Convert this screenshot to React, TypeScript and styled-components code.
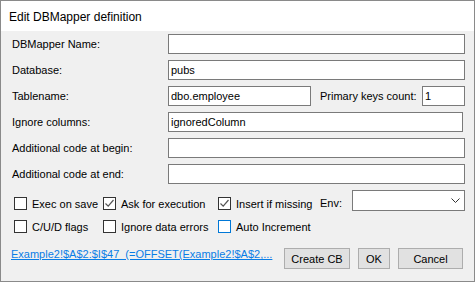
import * as React from "react";
import styled, { createGlobalStyle } from "styled-components";

const GlobalStyle = createGlobalStyle`
  html, body {
    margin: 0;
    padding: 0;
    background: #ffffff;
  }
  body {
    font-family: "Liberation Sans", Arial, sans-serif;
    font-size: 11px;
    color: #000;
  }
`;

const Window = styled.div`
  width: 475px;
  height: 282px;
  box-sizing: border-box;
  border: 1px solid #8a8a8a;
  background: #f0f0f0;
  display: flex;
  flex-direction: column;
`;

const TitleBar = styled.div`
  height: 30px;
  flex: none;
  background: #ffffff;
  display: flex;
  align-items: center;
  padding-left: 8px;
  padding-top: 1px;
  box-sizing: border-box;
  font-size: 12px;
`;

const Body = styled.div`
  flex: 1;
  padding: 3px 9px 0 11px;
  display: flex;
  flex-direction: column;
`;

const Fields = styled.div`
  display: flex;
  flex-direction: column;
  gap: 6px;
`;

const Row = styled.div`
  display: flex;
  align-items: center;
  height: 20px;
`;

const Label = styled.label`
  width: 156px;
  flex: none;
  line-height: 20px;
  white-space: nowrap;
`;

const Input = styled.div<{ $width?: number; $trim?: number }>`
  box-sizing: border-box;
  height: 20px;
  ${(p) => (p.$width ? `width: ${p.$width}px; flex: none;` : "flex: 1;")}
  margin-right: ${(p) => p.$trim ?? 0}px;
  background: #ffffff;
  border: 1px solid #7a7a7a;
  padding: 0 2px;
  line-height: 18px;
  white-space: nowrap;
  overflow: hidden;
`;

const InlineLabel = styled.span`
  margin-left: 9px;
  white-space: nowrap;
`;

const Spacer = styled.div`
  flex: 1;
`;

const Options = styled.div`
  margin-top: 6px;
  display: flex;
  flex-direction: column;
`;

const OptionRow = styled.div<{ $top?: number }>`
  display: grid;
  grid-template-columns: 89px 115px 102px auto 1fr;
  align-items: start;
  margin-top: ${(p) => p.$top ?? 0}px;
  padding-left: 2px;
`;

const CheckItem = styled.div<{ $offset?: number }>`
  display: flex;
  align-items: center;
  gap: 5px;
  height: 13px;
  margin-top: ${(p) => p.$offset ?? 0}px;
  white-space: nowrap;
`;

const Box = styled.span<{ $focus?: boolean }>`
  width: 13px;
  height: 13px;
  box-sizing: border-box;
  flex: none;
  background: #ffffff;
  border: 1px solid ${(p) => (p.$focus ? "#0078d7" : "#333333")};
  display: flex;
  align-items: center;
  justify-content: center;
`;

const EnvLabel = styled.span`
  margin-top: 7px;
  line-height: 13px;
`;

const Combo = styled.div`
  justify-self: end;
  width: 113px;
  height: 21px;
  box-sizing: border-box;
  background: #ffffff;
  border: 1px solid #7a7a7a;
  display: flex;
  align-items: center;
  justify-content: flex-end;
  padding-right: 4px;
`;

const Footer = styled.div`
  margin-top: 15px;
  display: flex;
  align-items: flex-start;
`;

const Link = styled.a`
  margin-left: -1px;
  margin-top: 0px;
  line-height: 13px;
  color: #0a7de6;
  text-decoration: underline;
  white-space: pre;
  cursor: pointer;
`;

const Buttons = styled.div`
  margin-left: auto;
  margin-right: 2px;
  display: flex;
  gap: 8px;
`;

const Button = styled.button<{ $width: number }>`
  width: ${(p) => p.$width}px;
  height: 21px;
  box-sizing: border-box;
  padding: 0;
  background: #e1e1e1;
  border: 1px solid #adadad;
  font-family: "Liberation Sans", Arial, sans-serif;
  font-size: 11px;
  color: #000;
`;

function Check({ checked, focus, label, offset }: { checked?: boolean; focus?: boolean; label: string; offset?: number }) {
  return (
    <CheckItem $offset={offset}>
      <Box $focus={focus}>
        {checked && (
          <svg width="11" height="11" viewBox="0 0 11 11">
            <polyline points="1.5,5.5 4.2,8.2 9.5,2" fill="none" stroke="#555" strokeWidth="1.2" />
          </svg>
        )}
      </Box>
      <span>{label}</span>
    </CheckItem>
  );
}

export default function App() {
  return (
    <>
      <GlobalStyle />
      <Window>
        <TitleBar>Edit DBMapper definition</TitleBar>
        <Body>
          <Fields>
            <Row>
              <Label>DBMapper Name:</Label>
              <Input />
            </Row>
            <Row>
              <Label>Database:</Label>
              <Input>pubs</Input>
            </Row>
            <Row>
              <Label>Tablename:</Label>
              <Input $width={143}>dbo.employee</Input>
              <InlineLabel>Primary keys count:</InlineLabel>
              <Spacer />
              <Input $width={43}>1</Input>
            </Row>
            <Row>
              <Label>Ignore columns:</Label>
              <Input $trim={2}>ignoredColumn</Input>
            </Row>
            <Row>
              <Label>Additional code at begin:</Label>
              <Input />
            </Row>
            <Row>
              <Label>Additional code at end:</Label>
              <Input />
            </Row>
          </Fields>
          <Options>
            <OptionRow>
              <Check label="Exec on save" offset={7} />
              <Check label="Ask for execution" checked offset={7} />
              <Check label="Insert if missing" checked offset={7} />
              <EnvLabel>Env:</EnvLabel>
              <Combo>
                <svg width="9" height="5" viewBox="0 0 9 5">
                  <polyline points="0.5,0.5 4.5,4.5 8.5,0.5" fill="none" stroke="#333" strokeWidth="1" />
                </svg>
              </Combo>
            </OptionRow>
            <OptionRow $top={9}>
              <Check label="C/U/D flags" />
              <Check label="Ignore data errors" />
              <Check label="Auto Increment" focus />
            </OptionRow>
          </Options>
          <Footer>
            <Link>{"Example2!$A$2:$I$47  (=OFFSET(Example2!$A$2,..."}</Link>
            <Buttons>
              <Button $width={66}>Create CB</Button>
              <Button $width={32}>OK</Button>
              <Button $width={65}>Cancel</Button>
            </Buttons>
          </Footer>
        </Body>
      </Window>
    </>
  );
}
